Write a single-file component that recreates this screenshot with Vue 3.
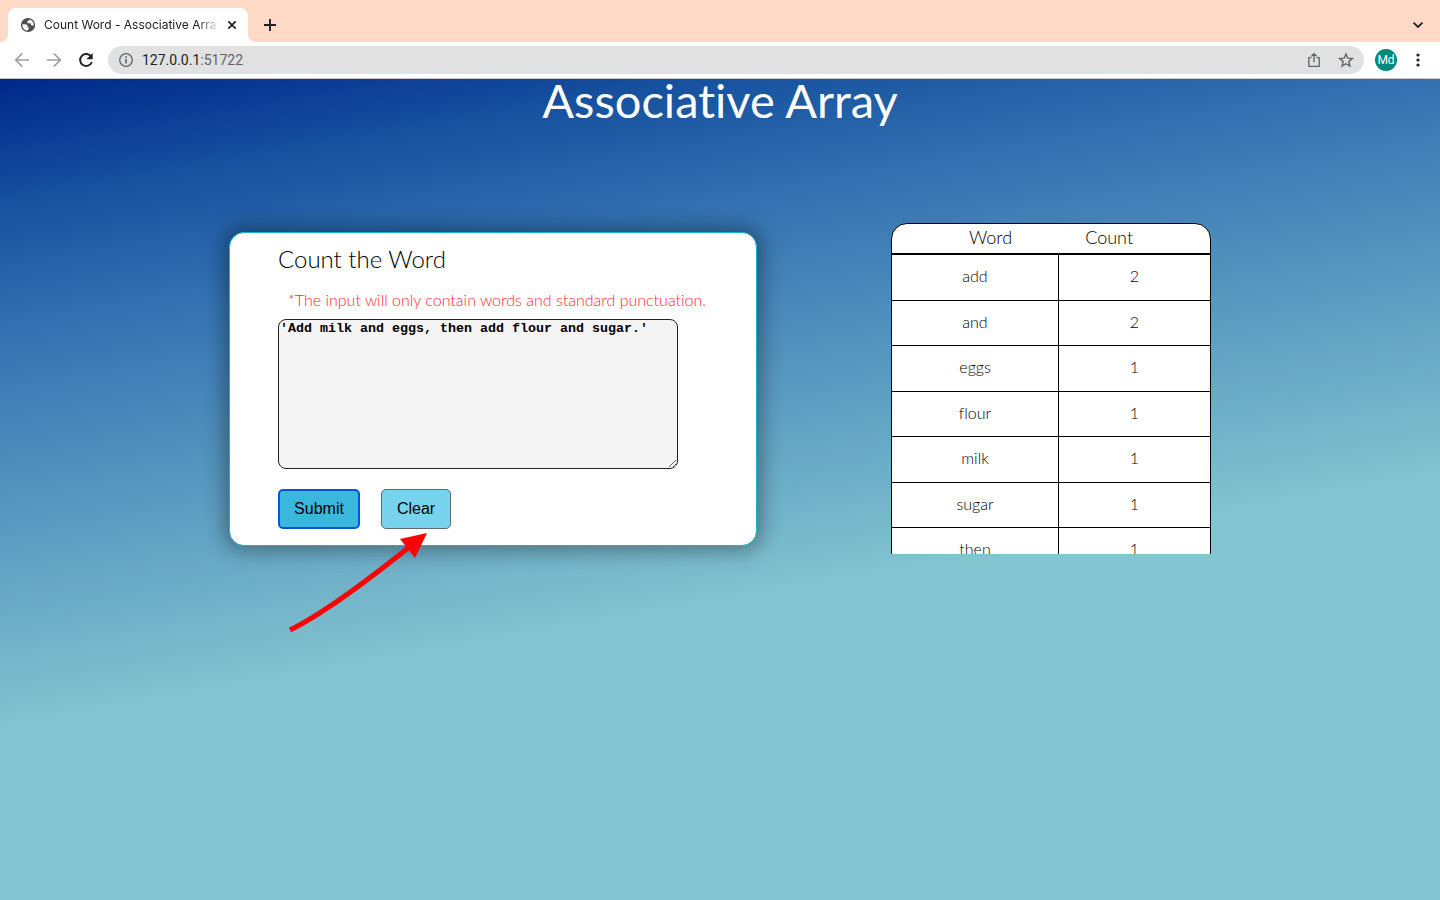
<script setup>
import { ref } from 'vue'

const text = ref("'Add milk and eggs, then add flour and sugar.'")
const rows = ref([
  { word: 'add', count: 2 },
  { word: 'and', count: 2 },
  { word: 'eggs', count: 1 },
  { word: 'flour', count: 1 },
  { word: 'milk', count: 1 },
  { word: 'sugar', count: 1 },
  { word: 'then', count: 1 },
])

function submit() {
  const counts = {}
  for (const word of text.value.toLowerCase().match(/[a-z]+/g) || []) {
    counts[word] = (counts[word] || 0) + 1
  }
  rows.value = Object.keys(counts).sort().map((word) => ({ word, count: counts[word] }))
}

function clear() {
  text.value = ''
  rows.value = []
}
</script>

<template>
  <div class="window">
    <header class="tabstrip">
      <div class="tab">
        <svg class="globe" viewBox="0 0 16 16" width="16" height="16" aria-hidden="true">
          <circle cx="8" cy="8" r="7.1" fill="#4a4d51" />
          <path d="M2.300 7.300h2.900c1.500 0 2.300.8 2.300 1.700v1.300h1.300v1.200c0 .6-.5 1-1.100 1v1.200A5.800 5.800 0 0 1 2.300 7.300ZM9.500 2.400c-.2 1.300-.9 1.700-2.100 1.700v1.300c0 .6.400.9 1 .9h1.300c.8 0 1.300.5 1.300 1.200s.5 1.100 1.200 1.100h1.500A5.800 5.800 0 0 0 9.500 2.400Z" fill="#fff" />
        </svg>
        <span class="tab-title">Count Word - Associative Array</span>
        <button class="icon-btn" aria-label="Close tab">
          <svg viewBox="0 0 10 10" width="10" height="10"><path d="M1.300 1.300l7.400 7.400M8.700 1.300l-7.400 7.400" stroke="#202124" stroke-width="1.700" /></svg>
        </button>
      </div>
      <button class="icon-btn new-tab" aria-label="New tab">
        <svg viewBox="0 0 12 12" width="12" height="12"><path d="M6 0v12M0 6h12" stroke="#202124" stroke-width="1.900" /></svg>
      </button>
      <button class="icon-btn tab-search" aria-label="Search tabs">
        <svg viewBox="0 0 12 8" width="12" height="8"><path d="M1.500 1.700 6 6l4.500-4.300" fill="none" stroke="#202124" stroke-width="1.800" /></svg>
      </button>
    </header>

    <nav class="toolbar">
      <button class="icon-btn" aria-label="Back">
        <svg viewBox="0 0 16 16" width="16" height="16"><path d="M15 8H2M8.200 1.500 1.700 8l6.500 6.500" fill="none" stroke="#9a9da1" stroke-width="1.700" /></svg>
      </button>
      <button class="icon-btn" aria-label="Forward">
        <svg viewBox="0 0 16 16" width="16" height="16"><path d="M1 8h13M7.800 1.500 14.300 8l-6.500 6.500" fill="none" stroke="#9a9da1" stroke-width="1.700" /></svg>
      </button>
      <button class="icon-btn" aria-label="Reload">
        <svg viewBox="0 0 16 16" width="16" height="16">
          <path d="M13.300 4.900A6 6 0 1 0 13.800 10" fill="none" stroke="#202124" stroke-width="2" />
          <path d="M14.700 1v6.300H8.400Z" fill="#202124" />
        </svg>
      </button>
      <div class="omnibox">
        <svg viewBox="0 0 16 16" width="16" height="16" aria-hidden="true">
          <circle cx="8" cy="8" r="6.300" fill="none" stroke="#5f6368" stroke-width="1.300" />
          <path d="M8 7v4.500M8 4.300v1.600" stroke="#5f6368" stroke-width="1.600" />
        </svg>
        <span class="url"><span class="host">127.0.0.1</span>:51722</span>
        <button class="icon-btn" aria-label="Share">
          <svg viewBox="0 0 16 16" width="16" height="16" fill="none" stroke="#5f6368" stroke-width="1.300"><path d="M5.300 5.700H2.800v8.600h10.400V5.700h-2.500M8 10.300V1.800M5.200 4.400 8 1.600l2.800 2.800" /></svg>
        </button>
        <button class="icon-btn" aria-label="Bookmark this page">
          <svg viewBox="0 0 16 16" width="16" height="16"><path d="m8 2 1.750 4.200 4.550.4-3.450 3 1.050 4.450L8 11.700l-3.900 2.350L5.150 9.600 1.700 6.600l4.550-.4Z" fill="none" stroke="#5f6368" stroke-width="1.400" /></svg>
        </button>
      </div>
      <button class="avatar" aria-label="Profile Md">Md</button>
      <button class="icon-btn" aria-label="Menu">
        <svg viewBox="0 0 4 14" width="4" height="14" fill="#202124"><circle cx="2" cy="2" r="1.600" /><circle cx="2" cy="7" r="1.600" /><circle cx="2" cy="12" r="1.600" /></svg>
      </button>
    </nav>

    <main class="page">
      <h1>Associative Array</h1>
      <div class="content">
        <form class="card" @submit.prevent="submit">
          <h2>Count the Word</h2>
          <label class="hint" for="words">*The input will only contain words and standard punctuation.</label>
          <textarea id="words" v-model="text" spellcheck="false"></textarea>
          <div class="actions">
            <button type="submit" class="btn primary">Submit</button>
            <button type="button" class="btn" @click="clear">Clear</button>
          </div>
          <svg class="arrow" viewBox="0 0 144 104" width="144" height="104" aria-hidden="true">
            <path d="M5 97Q46 77 128 11" fill="none" stroke="#f00" stroke-width="5" />
            <path d="M142 0 115 6 130 25Z" fill="#f00" />
          </svg>
        </form>

        <section class="results">
          <table>
            <thead>
              <tr>
                <th scope="col">Word</th>
                <th scope="col">Count</th>
              </tr>
            </thead>
            <tbody>
              <tr v-for="row in rows" :key="row.word">
                <td>{{ row.word }}</td>
                <td>{{ row.count }}</td>
              </tr>
            </tbody>
          </table>
        </section>
      </div>
    </main>
  </div>
</template>

<style>
body {
  margin: 0;
}
</style>

<style scoped>
* {
  box-sizing: border-box;
}

.window {
  display: flex;
  flex-direction: column;
  min-height: 100vh;
  font-family: Lato, "Open Sans", sans-serif;
  font-variant-ligatures: none;
  color: #000;
}

.icon-btn {
  display: flex;
  align-items: center;
  justify-content: center;
  flex: none;
  padding: 0;
  border: 0;
  background: none;
}

.tabstrip {
  display: flex;
  align-items: center;
  height: 42px;
  padding: 8px 16px 0 8px;
  background: #ffdac7;
}

.tab {
  position: relative;
  display: flex;
  align-items: center;
  width: 240px;
  height: 34px;
  padding: 0 11px 0 12px;
  border-radius: 8px 8px 0 0;
  background: #fff;
}

.tab::before,
.tab::after {
  content: "";
  position: absolute;
  bottom: 0;
  width: 8px;
  height: 8px;
}

.tab::before {
  right: 100%;
  background: radial-gradient(circle at 0 0, transparent 8px, #fff 8px);
}

.tab::after {
  left: 100%;
  background: radial-gradient(circle at 100% 0, transparent 8px, #fff 8px);
}

.globe {
  flex: none;
}

.tab-title {
  flex: 1;
  margin: 0 8px;
  padding-bottom: 2px;
  overflow: hidden;
  white-space: nowrap;
  font-family: Inter, Roboto, sans-serif;
  font-size: 12px;
  color: #202124;
  -webkit-mask-image: linear-gradient(to left, transparent, #000 20px);
  mask-image: linear-gradient(to left, transparent, #000 20px);
}

.new-tab {
  margin-left: 16px;
}

.tab-search {
  margin-left: auto;
}

.toolbar {
  display: flex;
  align-items: center;
  gap: 16px;
  height: 37px;
  padding: 0 20px 0 14px;
  border-bottom: 1px solid #c9c9c9;
  background: #fff;
}

.omnibox {
  display: flex;
  align-items: center;
  flex: 1;
  gap: 16px;
  height: 28px;
  margin-right: -5px;
  margin-left: -2px;
  padding: 0 10px;
  border-radius: 14px;
  background: #e1e1e1;
}

.url {
  flex: 1;
  margin-left: -8px;
  font-family: Roboto, sans-serif;
  font-size: 14px;
  color: #5f6368;
}

.host {
  color: #202124;
}

.avatar {
  flex: none;
  width: 22px;
  height: 22px;
  margin-right: 3px;
  padding: 0;
  border: 0;
  border-radius: 50%;
  background: #00897b;
  font-family: Roboto, sans-serif;
  font-size: 12px;
  color: #fff;
}

.page {
  flex: 1;
  background: linear-gradient(170deg, #00278b, #17529f 12%, #3472b2 24%, #83c5d0 61%);
}

h1 {
  margin: 0;
  font-size: 47px;
  font-weight: 400;
  line-height: 42px;
  text-align: center;
  color: #fff;
}

.content {
  display: flex;
  justify-content: center;
  align-items: flex-start;
  gap: 134px;
  margin-top: 102px;
  padding-bottom: 96px;
}

.card {
  position: relative;
  width: 528px;
  margin-top: 9px;
  padding: 12px 48px 16px;
  border: 1px solid #17b4c9;
  border-radius: 15px;
  background: #fff;
  box-shadow: 0 0 20px 5px rgba(0, 0, 0, 0.35);
}

h2 {
  margin: 0;
  font-size: 24px;
  font-weight: 300;
  line-height: 28px;
}

.hint {
  display: block;
  margin: 17px 0 9px 10px;
  font-size: 16px;
  font-weight: 300;
  line-height: 20px;
  white-space: nowrap;
  color: #ff2a2e;
}

textarea {
  display: block;
  width: 400px;
  height: 150px;
  padding: 1px;
  border: 1px solid #222;
  border-radius: 8px;
  background: #f4f4f4;
  font-family: "Liberation Mono", monospace;
  font-weight: 700;
  color: #000;
}

.actions {
  display: flex;
  gap: 21px;
  margin-top: 20px;
}

.btn {
  min-width: 70px;
  height: 40px;
  padding: 0 14px;
  border: 1px solid #5d6a70;
  border-radius: 5px;
  background: #77d3ee;
  font-family: "Liberation Sans", Arial, sans-serif;
  font-size: 16px;
  color: #000;
}

.btn.primary {
  min-width: 82px;
  border: 2px solid #0456d6;
  background: #39b7dc;
}

.arrow {
  position: absolute;
  top: 300px;
  left: 55px;
}

.results {
  width: 320px;
  height: 331px;
  overflow: hidden;
}

table {
  display: block;
  border: 1px solid #000;
  border-radius: 16px;
  background: #fff;
}

thead {
  display: block;
}

thead tr {
  display: flex;
  justify-content: center;
  gap: 73px;
  height: 31px;
  border-bottom: 2px solid #000;
}

th {
  padding: 0;
  font-size: 18px;
  font-weight: 300;
  line-height: 26px;
}

tbody {
  display: table;
  width: 100%;
  table-layout: fixed;
  border-spacing: 0;
}

tbody tr {
  height: 45px;
}

tbody tr:nth-child(odd) {
  height: 46px;
}

td {
  padding: 0 0 4px;
  border-bottom: 1px solid #000;
  font-size: 16px;
  font-weight: 300;
  text-align: center;
}

td:first-child {
  width: 167px;
  border-right: 1px solid #000;
}
</style>
